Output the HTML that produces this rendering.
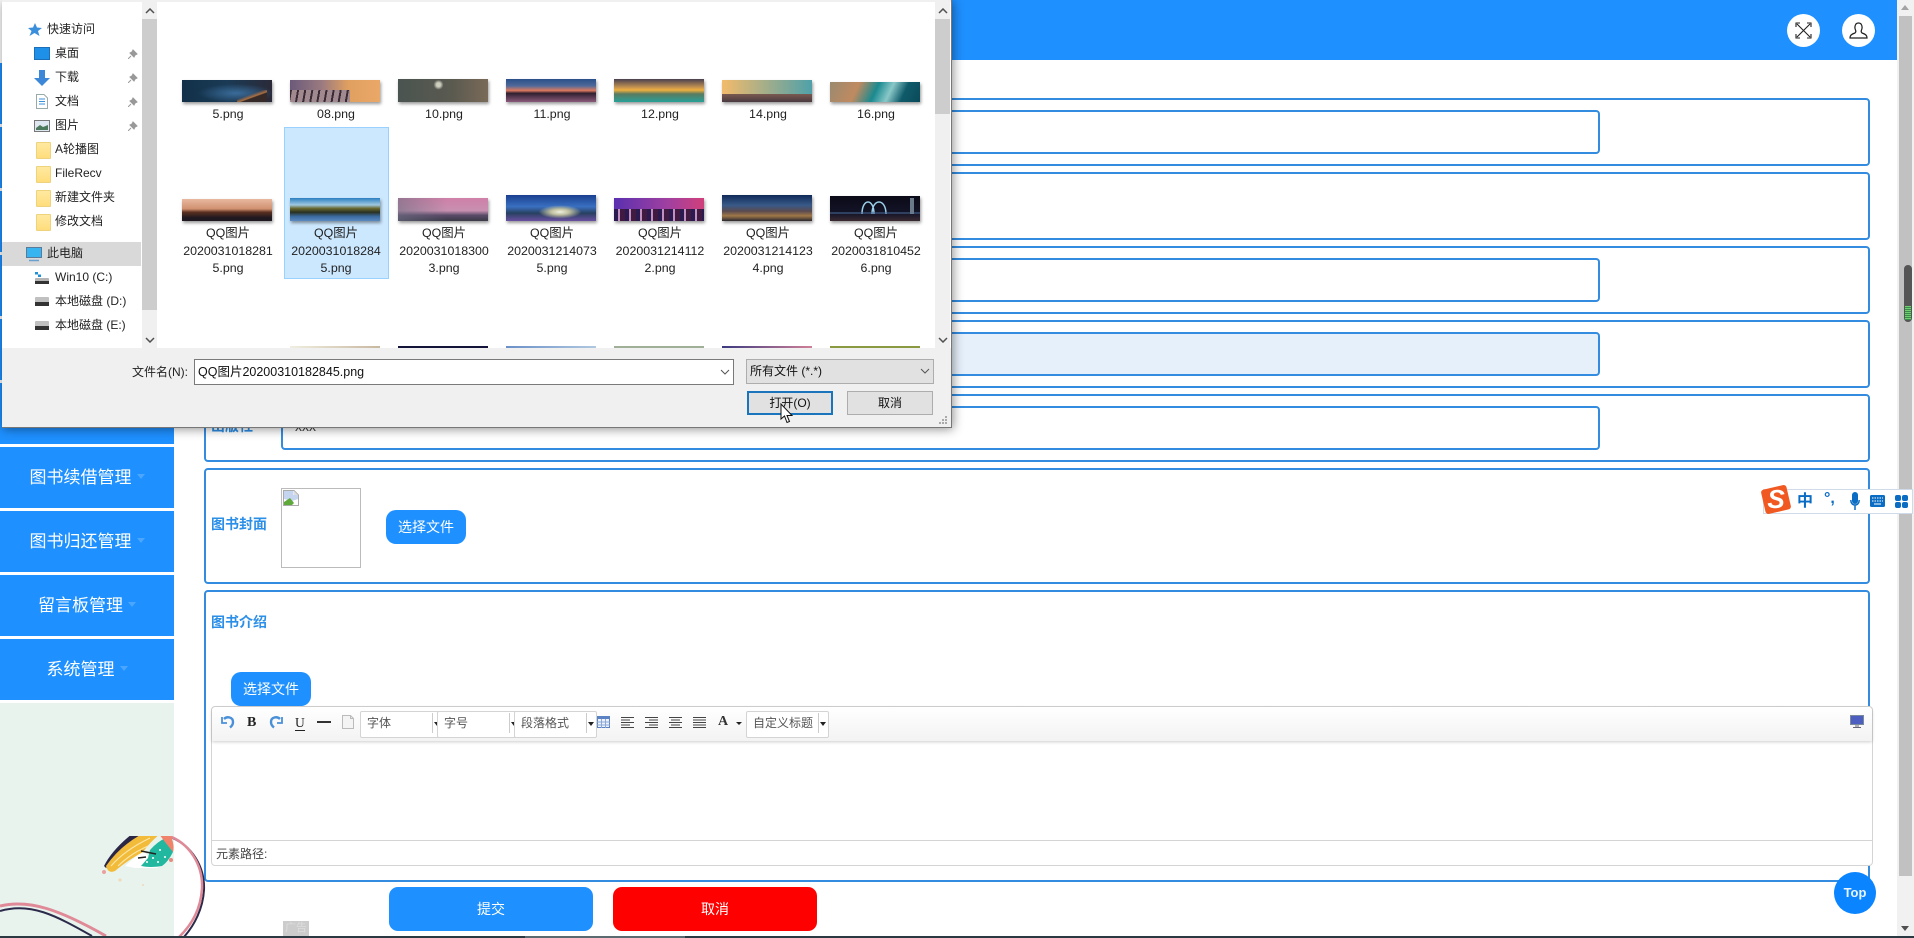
<!DOCTYPE html>
<html lang="zh-CN">
<head>
<meta charset="utf-8">
<title>图书管理</title>
<style>
html,body{margin:0;padding:0;width:1914px;height:938px;overflow:hidden;background:#fff}
body{position:relative;font-family:"Liberation Sans","Noto Sans CJK SC",sans-serif;font-size:12px;color:#222}
.a,.a *{box-sizing:border-box}
.a{position:absolute}
.side{position:absolute;left:0;width:174px;height:61px;background:#1e90ff;color:#fff;font-size:17px;line-height:61px;text-align:center}
.side i{display:inline-block;width:0;height:0;border:4.5px solid transparent;border-top:5px solid #4aa6ff;border-bottom:0;margin-left:5px;vertical-align:4px}
.box{position:absolute;left:204px;width:1662px;border:2px solid #338ce0;border-radius:4px;background:#fff}
.inp{position:absolute;left:281px;width:1315px;height:40px;border:2px solid #338ce0;border-radius:4px;background:#fff}
.lb{position:absolute;left:211px;font-size:14px;font-weight:700;color:#2b8fe8;line-height:20px}
.btn{position:absolute;width:80px;height:34px;border-radius:10px;background:#1e90ff;color:#fff;font-size:14px;line-height:34px;text-align:center}
.big{position:absolute;top:887px;width:204px;height:44px;border-radius:9px;color:#fff;font-size:14px;line-height:44px;text-align:center}
.sel{position:absolute;top:711px;width:75px;height:25px;border:1px solid #d4d4d4;border-radius:2px;background:#fff;color:#555;font-size:12px;line-height:23px;padding-left:6px;overflow:hidden;white-space:nowrap}
.sel:before{content:"";position:absolute;right:9px;top:1px;height:20px;width:1px;background:#ccc}
.sel:after{content:"";position:absolute;right:2px;top:10px;border:3px solid transparent;border-top:4px solid #222;border-bottom:0}
.n{position:absolute;font-size:12px;line-height:18px;color:#222;white-space:nowrap}
.pin{position:absolute;left:128px;width:10px;height:10px}
.fold{position:absolute;left:36px;width:13px;height:15px;background:linear-gradient(#ffe9a0,#ffdd7c);border:1px solid #efd27c;border-radius:1px}
.t{position:absolute;width:90px;box-shadow:1px 2px 3px rgba(0,0,0,.4);overflow:hidden}
.f{position:absolute;width:106px;text-align:center;font-size:12.4px;line-height:17.5px;color:#222}
</style>
</head>
<body>
<!-- sidebar -->
<div class="side" style="top:63px"></div>
<div class="side" style="top:127px"></div>
<div class="side" style="top:191px"></div>
<div class="side" style="top:255px"></div>
<div class="side" style="top:319px"></div>
<div class="side" style="top:383px"></div>
<div class="side" style="top:447px">图书续借管理<i></i></div>
<div class="side" style="top:511px">图书归还管理<i></i></div>
<div class="side" style="top:575px">留言板管理<i></i></div>
<div class="side" style="top:639px">系统管理<i></i></div>
<div class="a" style="left:0;top:703px;width:174px;height:233px;background:#e8f3ee"></div>

<!-- header -->
<div class="a" style="left:174px;top:0;width:1723px;height:60px;background:#1e90ff"></div>
<div class="a" style="left:1787px;top:14px;width:33px;height:33px;border-radius:50%;background:#fff"></div>
<svg class="a" style="left:1795px;top:22px" width="17" height="17" viewBox="0 0 17 17" fill="none" stroke="#222" stroke-width="1.1"><path d="M2 2L15 15M15 2L2 15M1 5V1H5M12 1H16V5M1 12V16H5M16 12V16H12"/></svg>
<div class="a" style="left:1842px;top:14px;width:33px;height:33px;border-radius:50%;background:#fff"></div>
<svg class="a" style="left:1849px;top:22px" width="19" height="17" viewBox="0 0 19 17" fill="none" stroke="#222" stroke-width="1.2"><path d="M1 16H18C18 13 16 12 13 11C12 10 12 9 12.500 8C13.500 6 13.500 1 9.500 1C5.500 1 5.500 6 6.500 8C7 9 7 10 6 11C3 12 1 13 1 16Z"/></svg>

<!-- form -->
<div class="box" style="top:98px;height:64px"></div>
<div class="box" style="top:172px;height:64px"></div>
<div class="box" style="top:246px;height:64px"></div>
<div class="box" style="top:320px;height:64px"></div>
<div class="box" style="top:394px;height:64px"></div>
<div class="inp" style="top:110px"></div>
<div class="inp" style="top:258px"></div>
<div class="inp" style="top:332px;background:#e6f0fb"></div>
<div class="inp" style="top:406px"></div>
<div class="lb" style="top:416px">出版社</div>
<div class="a" style="left:295px;top:417px;font-size:14px;line-height:18px;color:#444">xxx</div>

<div class="box" style="top:468px;height:112px"></div>
<div class="lb" style="top:514px">图书封面</div>
<div class="a" style="left:281px;top:488px;width:80px;height:80px;border:1px solid #bbb;background:#fff"></div>
<svg class="a" style="left:283px;top:490px" width="16" height="16" viewBox="0 0 16 16"><path d="M0.500 0.500H11L15.500 5V15.500H0.500Z" fill="#fff" stroke="#aaa"/><path d="M1 1H10.500V5H15V9L9 11L1 9Z" fill="#c5d5ef"/><path d="M1 15V12L7 8L11 13L9 15Z" fill="#5fa83a"/><path d="M11 1L15 5H11Z" fill="#ddd"/></svg>
<div class="btn" style="left:386px;top:510px">选择文件</div>

<div class="box" style="top:590px;height:288px"></div>
<div class="lb" style="top:612px">图书介绍</div>
<div class="btn" style="left:231px;top:672px">选择文件</div>

<!-- editor -->
<div class="a" style="left:211px;top:706px;width:1662px;height:160px;border:1px solid #d4d4d4;border-radius:4px;background:#fff"></div>
<div class="a" style="left:212px;top:707px;width:1660px;height:34px;background:linear-gradient(#fff,#f3f3f3);box-shadow:0 1px 3px rgba(0,0,0,.2);border-radius:4px 4px 0 0"></div>
<div class="a" style="left:212px;top:840px;width:1660px;height:1px;background:#d4d4d4"></div>
<div class="a" style="left:216px;top:845px;font-size:12px;line-height:18px;color:#444">元素路径:</div>
<svg class="a" style="left:221px;top:715px" width="14" height="14" viewBox="0 0 14 14" fill="none" stroke="#4a90d9" stroke-width="2.4"><path d="M3 4C6 1 12 2 12 7C12 9 11 11 9 12.500"/><path d="M1 2V8H6" stroke-width="1.800"/></svg>
<div class="a" style="left:247px;top:714px;font:700 14px/17px 'Liberation Serif',serif;color:#222">B</div>
<svg class="a" style="left:269px;top:715px" width="14" height="14" viewBox="0 0 14 14" fill="none" stroke="#4a90d9" stroke-width="2.400"><path d="M11 4C8 1 2 2 2 7C2 9 3 11 5 12.500"/><path d="M13 2V8H8" stroke-width="1.800"/></svg>
<div class="a" style="left:295px;top:714px;font:400 13.500px/17px 'Liberation Serif',serif;color:#222;border-bottom:1px solid #222;height:17px;width:10px">U</div>
<div class="a" style="left:317px;top:721px;width:14px;height:1.500px;background:#333"></div>
<svg class="a" style="left:342px;top:715px" width="12" height="14" viewBox="0 0 12 14"><path d="M.5 .5H8.500L11.500 3.500V13.500H.5Z" fill="#f4f4f4" stroke="#bbb"/><path d="M8.500 .5V3.500H11.500" fill="none" stroke="#bbb"/></svg>
<div class="sel" style="left:360px">字体</div>
<div class="sel" style="left:437px">字号</div>
<div class="sel" style="left:514px">段落格式</div>
<svg class="a" style="left:597px;top:716px" width="13" height="12" viewBox="0 0 13 12"><rect x=".5" y=".5" width="12" height="11" fill="#eef2fa" stroke="#5b83c4"/><rect x="0" y="0" width="13" height="3" fill="#5b83c4"/><path d="M4.500 3V12M8.500 3V12M0 6H13M0 9H13" stroke="#8aa8d8" stroke-width="1"/></svg>
<svg class="a" style="left:621px;top:717px" width="86" height="11" viewBox="0 0 86 11" stroke="#444" stroke-width="1"><path d="M0 .5H13M0 3H9M0 5.500H13M0 8H9M0 10.500H13M24 .5H37M28 3H37M24 5.500H37M28 8H37M24 10.500H37M48 .5H61M50 3H59M48 5.500H61M50 8H59M48 10.500H61M72 .5H85M72 3H85M72 5.500H85M72 8H85M72 10.500H85"/></svg>
<div class="a" style="left:718px;top:713px;font:700 14px/17px 'Liberation Serif',serif;color:#333">A</div>
<div class="a" style="left:736px;top:722px;border:3px solid transparent;border-top:3px solid #222;border-bottom:0"></div>
<div class="sel" style="left:746px">自定义标题</div>
<svg class="a" style="left:1850px;top:715px" width="14" height="13" viewBox="0 0 14 13"><rect x=".5" y=".5" width="13" height="9" fill="#4c5fc0" stroke="#7a8a9a"/><path d="M5 11H9M3 12.500H11" stroke="#667"/></svg>

<!-- bottom buttons -->
<div class="big" style="left:389px;background:#1e90ff">提交</div>
<div class="big" style="left:613px;background:#f00">取消</div>
<div class="a" style="left:283px;top:921px;width:26px;height:15px;background:#ccc;color:#ddd;font-size:11px;line-height:15px;text-align:center">广告</div>

<!-- art -->
<svg class="a" style="left:0;top:830px" width="210" height="106" viewBox="0 830 210 106">
<defs><clipPath id="c"><rect x="0" y="836" width="210" height="100"/></clipPath></defs>
<g clip-path="url(#c)">
<path d="M0 911C30 902 55 915 92 936" fill="none" stroke="#2b2a4a" stroke-width="2"/>
<path d="M0 906C30 899 60 910 106 936" fill="none" stroke="#e08a98" stroke-width="3"/>
<path d="M168 836C193 845 205 868 204 890C203 908 195 925 183 938" fill="none" stroke="#2b2a4a" stroke-width="2"/>
<path d="M166 835C190 842 203 866 202 888C201 908 192 925 178 938" fill="none" stroke="#e08a98" stroke-width="2.500"/>
<path d="M125 866L143 850L158 868L135 868Z" fill="#fff"/>
<path d="M104 866Q112 850 132 834L146 834Q120 848 106 868Z" fill="#2a2646"/>
<path d="M106 866Q120 846 142 834L160 834Q150 842 143 852Q125 862 115 871Q108 874 106 866Z" fill="#f2bb3a"/>
<path d="M111 866Q125 850 150 838M118 866Q130 854 148 846" fill="none" stroke="#fbe6a8" stroke-width="1.200"/>
<path d="M150 850Q158 841 166 838L173 852Q168 862 162 866Q150 868 141 866L148 858Z" fill="#22b8a0"/>
<path d="M159 834L170 834Q175 845 173 852L165 842Z" fill="#f2836b"/>
<path d="M141 851L156 854M138 858L146 857" stroke="#222" stroke-width="1.500"/>
<g fill="#fff"><circle cx="153" cy="858" r="1"/><circle cx="160" cy="850" r="1"/><circle cx="165" cy="857" r="1"/><circle cx="158" cy="862" r="1"/><circle cx="147" cy="862" r="1"/></g>
<circle cx="104" cy="872" r="2" fill="#eaa0a0"/><circle cx="171" cy="860" r="2" fill="#e98a80"/><circle cx="120" cy="880" r="1.500" fill="#f0d8b8"/><circle cx="143" cy="885" r="1" fill="#f0d8b8"/>
</g>
</svg>

<!-- scrollbar -->
<div class="a" style="left:1897px;top:0;width:17px;height:936px;background:#f1f1f1"></div>
<div class="a" style="left:1899px;top:16px;width:13px;height:860px;background:#c1c1c1"></div>
<div class="a" style="left:1901px;top:5px;border:4px solid transparent;border-bottom:5px solid #a3a3a3;border-top:0"></div>
<div class="a" style="left:1901px;top:926px;border:4px solid transparent;border-top:5px solid #505050;border-bottom:0"></div>
<div class="a" style="left:1904px;top:265px;width:8px;height:57px;border-radius:4px;background:#555;overflow:hidden"><div class="a" style="left:1px;top:41px;width:6px;height:14px;background:repeating-linear-gradient(#6fd26f 0 1px,#3a8a4a 1px 2px)"></div></div>

<!-- sogou -->
<div class="a" style="left:1763px;top:489px;width:150px;height:25px;background:#fff;border:1px solid #cfdbe8"></div>
<div class="a" style="left:1763px;top:487px;width:26px;height:25px;border-radius:3px;background:#f05a22;transform:rotate(-13deg)"></div>
<div class="a" style="left:1765px;top:486px;width:22px;font:italic 900 26px/27px 'Liberation Sans',sans-serif;color:#fff;text-align:center">S</div>
<div class="a" style="left:1797px;top:491px;font-size:16px;line-height:21px;font-weight:700;color:#0b6cc4">中</div>
<div class="a" style="left:1824px;top:491px;font-size:16px;line-height:16px;font-weight:700;color:#0b6cc4">°,</div>
<svg class="a" style="left:1850px;top:492px" width="10" height="19" viewBox="0 0 10 19" fill="none" stroke="#0b6cc4" stroke-width="1.500"><rect x="2" y="0" width="6" height="12" rx="3" fill="#0b6cc4" stroke="none"/><path d="M.8 8C.8 11 2.500 13 5 13S9.200 11 9.200 8M5 13V18"/></svg>
<svg class="a" style="left:1870px;top:495px" width="15" height="12" viewBox="0 0 15 12"><rect width="15" height="12" rx="1.500" fill="#0b6cc4"/><path d="M2 3H13M2 6H13" stroke="#fff" stroke-dasharray="1.500 1"/><path d="M4 9H11" stroke="#fff"/></svg>
<svg class="a" style="left:1895px;top:495px" width="13" height="13" viewBox="0 0 13 13" fill="#0b6cc4"><rect width="6" height="6" rx="2"/><rect x="7" width="6" height="6" rx="2"/><rect y="7" width="6" height="6" rx="2"/><rect x="7" y="7" width="6" height="6" rx="2"/></svg>

<!-- top button -->
<div class="a" style="left:1834px;top:872px;width:42px;height:42px;border-radius:50%;background:#0a84ff;color:#e8f4ff;font-size:13px;font-weight:700;line-height:42px;text-align:center">Top</div>

<!-- bottom strip -->
<div class="a" style="left:0;top:936px;width:1914px;height:2px;background:#2b3a42"></div>
<div class="a" style="left:525px;top:936px;width:160px;height:2px;background:#5a6a70"></div>

<!-- dialog -->
<div class="a" style="left:2px;top:0;width:950px;height:428px;background:#fff;box-shadow:1px 1px 10px rgba(0,0,0,.45);border-right:1px solid #777;border-bottom:1px solid #777"></div>
<div class="a" style="left:2px;top:0;width:949px;height:2px;background:#f0f0f0"></div>
<!-- nav pane -->
<div class="a" style="left:2px;top:242px;width:139px;height:24px;background:#d9d9d9"></div>
<div class="n" style="left:47px;top:20px">快速访问</div>
<div class="n" style="left:55px;top:44px">桌面</div>
<div class="n" style="left:55px;top:68px">下载</div>
<div class="n" style="left:55px;top:92px">文档</div>
<div class="n" style="left:55px;top:116px">图片</div>
<div class="n" style="left:55px;top:140px">A轮播图</div>
<div class="n" style="left:55px;top:164px">FileRecv</div>
<div class="n" style="left:55px;top:188px">新建文件夹</div>
<div class="n" style="left:55px;top:212px">修改文档</div>
<div class="n" style="left:47px;top:244px">此电脑</div>
<div class="n" style="left:55px;top:268px">Win10 (C:)</div>
<div class="n" style="left:55px;top:292px">本地磁盘 (D:)</div>
<div class="n" style="left:55px;top:316px">本地磁盘 (E:)</div>
<svg class="a" style="left:28px;top:23px" width="14" height="13" viewBox="0 0 14 13"><path d="M7 0L9 4.500L14 5L10 8L11.500 13L6.500 10L1.500 13L3.500 8L0 5L5 4.500Z" fill="#3a8fdc"/></svg>
<div class="a" style="left:34px;top:47px;width:16px;height:13px;background:#1e90e8;border:1px solid #1a6fb8"></div>
<svg class="a" style="left:34px;top:70px" width="16" height="16" viewBox="0 0 16 16"><path d="M5 0H11V8H16L8 16L0 8H5Z" fill="#3d87d8"/></svg>
<svg class="a" style="left:36px;top:94px" width="12" height="15" viewBox="0 0 12 15"><path d="M.5 .5H8L11.500 4V14.500H.5Z" fill="#fff" stroke="#9aa"/><path d="M3 5H9M3 7.500H9M3 10H9" stroke="#3a8fdc"/></svg>
<svg class="a" style="left:34px;top:120px" width="16" height="12" viewBox="0 0 16 12"><rect x=".5" y=".5" width="15" height="11" fill="#dfe8f0" stroke="#777"/><path d="M2 8L6 5L9 7L14 5V10H2Z" fill="#4d7a5c"/></svg>
<div class="fold" style="top:142px"></div>
<div class="fold" style="top:166px"></div>
<div class="fold" style="top:190px"></div>
<div class="fold" style="top:214px"></div>
<svg class="a" style="left:26px;top:247px" width="16" height="15" viewBox="0 0 16 15"><rect x=".5" y=".5" width="15" height="10" fill="#38b5f0" stroke="#5a7a9a"/><path d="M3 13.500H13" stroke="#6aa0d0" stroke-width="1.500"/></svg>
<svg class="a" style="left:34px;top:272px" width="15" height="12" viewBox="0 0 15 12"><rect x="1" y="0" width="3" height="2.500" fill="#1e90d8"/><rect x="4" y="2.500" width="3" height="2.500" fill="#1e90d8"/><rect x="1" y="6" width="14" height="6" rx="1" fill="#b5b5b5"/><rect x="1" y="9" width="14" height="3" fill="#333"/></svg>
<svg class="a" style="left:35px;top:297px" width="14" height="9" viewBox="0 0 14 9"><rect y="0" width="14" height="9" rx="1" fill="#c0c0c0"/><rect y="5" width="14" height="4" fill="#333"/></svg>
<svg class="a" style="left:35px;top:321px" width="14" height="9" viewBox="0 0 14 9"><rect y="0" width="14" height="9" rx="1" fill="#c0c0c0"/><rect y="5" width="14" height="4" fill="#333"/></svg>
<svg class="pin" style="top:49px" viewBox="0 0 10 10"><path d="M5 1L9 5L7 6L6 8L2 4L4 3ZM3 7L0 10" fill="#999" stroke="#999"/></svg>
<svg class="pin" style="top:73px" viewBox="0 0 10 10"><path d="M5 1L9 5L7 6L6 8L2 4L4 3ZM3 7L0 10" fill="#999" stroke="#999"/></svg>
<svg class="pin" style="top:97px" viewBox="0 0 10 10"><path d="M5 1L9 5L7 6L6 8L2 4L4 3ZM3 7L0 10" fill="#999" stroke="#999"/></svg>
<svg class="pin" style="top:121px" viewBox="0 0 10 10"><path d="M5 1L9 5L7 6L6 8L2 4L4 3ZM3 7L0 10" fill="#999" stroke="#999"/></svg>
<div class="a" style="left:142px;top:2px;width:15px;height:346px;background:#f0f0f0"></div>
<div class="a" style="left:142px;top:19px;width:15px;height:291px;background:#cdcdcd"></div>
<svg class="a" style="left:145px;top:8px" width="10" height="6" viewBox="0 0 10 6" fill="none" stroke="#505050" stroke-width="1.500"><path d="M1 5L5 1L9 5"/></svg>
<svg class="a" style="left:145px;top:337px" width="10" height="6" viewBox="0 0 10 6" fill="none" stroke="#505050" stroke-width="1.500"><path d="M1 1L5 5L9 1"/></svg>

<!-- file pane scrollbar -->
<div class="a" style="left:935px;top:2px;width:15px;height:346px;background:#f0f0f0"></div>
<div class="a" style="left:935px;top:19px;width:15px;height:95px;background:#cdcdcd"></div>
<svg class="a" style="left:938px;top:8px" width="10" height="6" viewBox="0 0 10 6" fill="none" stroke="#505050" stroke-width="1.500"><path d="M1 5L5 1L9 5"/></svg>
<svg class="a" style="left:938px;top:337px" width="10" height="6" viewBox="0 0 10 6" fill="none" stroke="#505050" stroke-width="1.500"><path d="M1 1L5 5L9 1"/></svg>

<!-- selected -->
<div class="a" style="left:284px;top:127px;width:105px;height:152px;background:#cce8ff;border:1px solid #99d1ff"></div>

<!-- thumbs row 1 -->
<div class="t" style="left:182px;top:80px;height:22px;background:radial-gradient(ellipse at 60% 60%,#3a6c9a 0,transparent 50%),linear-gradient(90deg,#123048,#1a3a55 50%,#2a2a38)"><div class="a" style="left:55px;top:10px;width:30px;height:12px;background:linear-gradient(160deg,transparent 40%,#b07040 55%,#352a28 60%)"></div></div>
<div class="t" style="left:290px;top:80px;height:22px;background:linear-gradient(90deg,#6a5a7a,#9a7a80 35%,#e0a060 65%,#eaa868)"><div class="a" style="left:0;top:10px;width:60px;height:12px;background:repeating-linear-gradient(100deg,#3a2a34 0 2px,#a08a90 2px 7px)"></div></div>
<div class="t" style="left:398px;top:79px;height:23px;background:radial-gradient(circle at 45% 25%,#cfcfc0 0,#cfcfc0 2px,transparent 5px),linear-gradient(90deg,#4a5450,#5a5a50 60%,#7a6a58)"></div>
<div class="t" style="left:506px;top:79px;height:23px;background:linear-gradient(#2a4f8a,#506a9a 30%,#e07a60 50%,#302030 62%,#8a5a7a)"></div>
<div class="t" style="left:614px;top:79px;height:23px;background:linear-gradient(#4a4050,#c09050 35%,#f0b040 48%,#5a7a60 65%,#28a098)"></div>
<div class="t" style="left:722px;top:80px;height:22px;background:linear-gradient(90deg,rgba(240,170,70,.8),rgba(60,150,160,.9) 100%),linear-gradient(#fff,#fff);"><div class="a" style="left:0;top:14px;width:90px;height:8px;background:linear-gradient(#7a5a50,#4a3a40)"></div></div>
<div class="t" style="left:830px;top:82px;height:20px;background:linear-gradient(115deg,#9a8a70 0,#c08a60 30%,#1a8a90 50%,#8ac8c8 65%,#0f5a6a 80%,#0a4a5a)"></div>
<!-- thumbs row 2 -->
<div class="t" style="left:182px;top:199px;height:22px;background:linear-gradient(#e8b8a0,#d09070 45%,#5a3020 60%,#201820 85%)"></div>
<div class="t" style="left:290px;top:198px;height:23px;background:linear-gradient(#2a7fc0,#9fc8e0 30%,#6a6a30 45%,#2a3020 62%,#3a6aa0 80%,#5a8ac0)"></div>
<div class="t" style="left:398px;top:198px;height:23px;background:linear-gradient(90deg,rgba(110,110,130,.6),transparent 55%),linear-gradient(#d080a8,#c890b0 55%,#5a4a68 75%,#3a3a48)"></div>
<div class="t" style="left:506px;top:195px;height:26px;background:radial-gradient(ellipse at 60% 65%,#f0f0e0 0,#c0c0a0 12%,transparent 28%),linear-gradient(#1a3f90,#3a70c0 45%,#284060 70%,#6a50a0)"></div>
<div class="t" style="left:614px;top:198px;height:23px;background:linear-gradient(90deg,#5a30b0,#a040a0 60%,#d0407a),linear-gradient(#000,#000)"><div class="a" style="left:0;top:11px;width:90px;height:12px;background:repeating-linear-gradient(90deg,#2a1a50 0 4px,#c090c0 4px 6px,#401a40 6px 11px)"></div></div>
<div class="t" style="left:722px;top:195px;height:26px;background:linear-gradient(#102a58,#3a5a88 40%,#5a4a50 62%,#a07848 80%,#2a2830)"></div>
<div class="t" style="left:830px;top:196px;height:25px;background:linear-gradient(#0a0a18,#141428 70%,#3a2a30)"><svg class="a" style="left:0;top:0" width="90" height="25" viewBox="0 0 90 25" fill="none"><path d="M32 18C32 2 44 2 44 18M42 18C42 2 56 2 56 18" stroke="#9ad0e8" stroke-width="1.500"/><path d="M0 17H90" stroke="#4a6a9a"/><rect x="80" y="2" width="4" height="16" fill="#6a7a8a"/></svg></div>
<!-- thumbs row 3 -->
<div class="a" style="left:290px;top:346px;width:90px;height:2px;background:linear-gradient(90deg,#f0eee0,#c8b8a0)"></div>
<div class="a" style="left:398px;top:346px;width:90px;height:2px;background:#14143a"></div>
<div class="a" style="left:506px;top:346px;width:90px;height:2px;background:linear-gradient(90deg,#6a90c8,#b0c8e0)"></div>
<div class="a" style="left:614px;top:346px;width:90px;height:2px;background:#a0b098"></div>
<div class="a" style="left:722px;top:346px;width:90px;height:2px;background:linear-gradient(90deg,#3a3a80,#d08098)"></div>
<div class="a" style="left:830px;top:346px;width:90px;height:2px;background:#8a9a40"></div>

<!-- labels -->
<div class="f" style="left:175px;top:106px">5.png</div>
<div class="f" style="left:283px;top:106px">08.png</div>
<div class="f" style="left:391px;top:106px">10.png</div>
<div class="f" style="left:499px;top:106px">11.png</div>
<div class="f" style="left:607px;top:106px">12.png</div>
<div class="f" style="left:715px;top:106px">14.png</div>
<div class="f" style="left:823px;top:106px">16.png</div>
<div class="f" style="left:175px;top:225px">QQ图片<br>2020031018281<br>5.png</div>
<div class="f" style="left:283px;top:225px">QQ图片<br>2020031018284<br>5.png</div>
<div class="f" style="left:391px;top:225px">QQ图片<br>2020031018300<br>3.png</div>
<div class="f" style="left:499px;top:225px">QQ图片<br>2020031214073<br>5.png</div>
<div class="f" style="left:607px;top:225px">QQ图片<br>2020031214112<br>2.png</div>
<div class="f" style="left:715px;top:225px">QQ图片<br>2020031214123<br>4.png</div>
<div class="f" style="left:823px;top:225px">QQ图片<br>2020031810452<br>6.png</div>

<!-- dialog footer -->
<div class="a" style="left:2px;top:348px;width:949px;height:79px;background:#f0f0f0"></div>
<div class="n" style="left:132px;top:363px">文件名(N):</div>
<div class="a" style="left:194px;top:359px;width:540px;height:26px;border:1px solid #7a7a7a;background:#fff;font-size:12.500px;line-height:24px;padding-left:3px;color:#111">QQ图片20200310182845.png</div>
<svg class="a" style="left:720px;top:369px" width="10" height="6" viewBox="0 0 10 6" fill="none" stroke="#555"><path d="M1 1L5 5L9 1"/></svg>
<div class="a" style="left:746px;top:359px;width:188px;height:25px;border:1px solid #adadad;background:#e1e1e1;font-size:12px;line-height:23px;padding-left:3px;color:#111">所有文件 (*.*)</div>
<svg class="a" style="left:920px;top:368px" width="10" height="6" viewBox="0 0 10 6" fill="none" stroke="#555"><path d="M1 1L5 5L9 1"/></svg>
<div class="a" style="left:747px;top:391px;width:86px;height:24px;border:2px solid #1a75bc;background:#e1e1e1;font-size:12px;line-height:20px;text-align:center;color:#111">打开(O)</div>
<div class="a" style="left:847px;top:391px;width:86px;height:24px;border:1px solid #adadad;background:#e1e1e1;font-size:12px;line-height:22px;text-align:center;color:#111">取消</div>
<svg class="a" style="left:938px;top:416px" width="10" height="10" viewBox="0 0 10 10" fill="#aaa"><rect x="7" y="0" width="2" height="2"/><rect x="4" y="3" width="2" height="2"/><rect x="7" y="3" width="2" height="2"/><rect x="1" y="6" width="2" height="2"/><rect x="4" y="6" width="2" height="2"/><rect x="7" y="6" width="2" height="2"/></svg>
<svg class="a" style="left:780px;top:403px" width="14" height="21" viewBox="0 0 14 21"><path d="M1 1V16L4.500 13L7 19.500L9.500 18.500L7 12.500H12Z" fill="#fff" stroke="#111"/></svg>
</body>
</html>
